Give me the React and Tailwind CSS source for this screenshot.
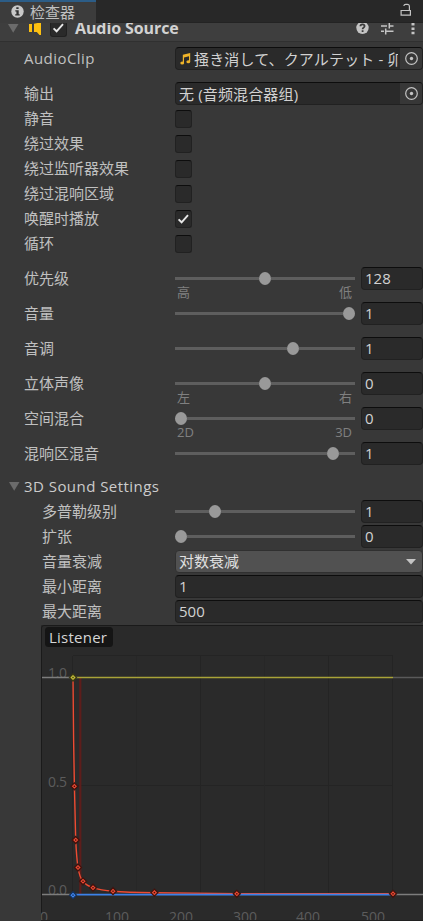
import React from "react";

function Box({ checked, className = "" }) {
  return (
    <span className={`flex h-[18px] w-[17px] shrink-0 items-center justify-center rounded-[3px] border border-[#212121] border-t-[#0d0d0d] bg-[#2a2a2a] ${className}`}>
      {checked && (
        <svg width="13" height="12" viewBox="0 0 13 12" fill="none" stroke="#e8e8e8" strokeWidth="1.9">
          <path d="M1.6 6.4 L4.6 9.3 L11 2.2" />
        </svg>
      )}
    </span>
  );
}

function Row({ label, sub, gap, latin, children }) {
  return (
    <div className={`flex h-[23px] items-center ${gap ? "mt-3" : "mt-0.5"} ${sub ? "pl-[42px]" : "pl-6"}`}>
      <span className={`shrink-0 whitespace-nowrap pb-0.5 ${sub ? "w-[133px]" : "w-[151px]"} ${latin ? "tracking-[0.45px]" : ""}`}>{label}</span>
      {children}
    </div>
  );
}

function Field({ children, className = "" }) {
  return (
    <div className={`flex h-[23px] items-center overflow-hidden rounded-[4px] border border-[#212121] border-t-[#0d0d0d] bg-[#2a2a2a] pb-px pl-[3px] text-[#d2d2d2] ${className}`}>
      {children}
    </div>
  );
}

function ObjectField({ children }) {
  return (
    <div className="flex h-[23px] w-[248px] overflow-hidden rounded-[4px] border border-[#212121] border-t-[#0d0d0d] bg-[#2a2a2a] text-[#d2d2d2]">
      <div className="mr-0.5 flex w-[222px] shrink-0 items-center overflow-hidden whitespace-nowrap pl-[3px] tracking-[0.15px]">{children}</div>
      <div className="flex flex-1 items-center justify-center bg-[#373737]">
        <svg width="15" height="15" viewBox="0 0 15 15">
          <circle cx="7.5" cy="7.5" r="5.8" fill="none" stroke="#c4c4c4" strokeWidth="1.2" />
          <circle cx="7.5" cy="7.5" r="1.7" fill="#c4c4c4" />
        </svg>
      </div>
    </div>
  );
}

function Slider({ at, value }) {
  return (
    <>
      <div className="flex h-[23px] w-[180px] shrink-0 items-center">
        <span className="h-[3px] bg-[#5e5e5e]" style={{ width: at - 6 }} />
        <span className="h-[13px] w-3 shrink-0 rounded-[50%] bg-[#999999]" />
        <span className="h-[3px] flex-1 bg-[#5e5e5e]" />
      </div>
      <Field className="ml-1.5 w-[62px]">{value}</Field>
    </>
  );
}

function Ends({ left, right }) {
  return (
    <div className="-mb-3 flex h-3 w-full items-center justify-between pl-[177px] pr-[71px] text-[13px] text-[#808080]">
      <span className="-mt-[9px]">{left}</span>
      <span className="-mt-[9px]">{right}</span>
    </div>
  );
}

const keys = [
  [74.4, 786.3], [75.7, 840], [78, 867.5], [83, 881.3], [93, 887.7],
  [113, 891.2], [154.4, 892.6], [236.8, 893.8], [393, 893.8],
];

function Key({ x, y, fill, edge }) {
  return (
    <g>
      <path d={`M${x - 3.5} ${y}L${x} ${y - 3.5}L${x + 3.5} ${y}L${x} ${y + 3.5}Z`} fill={fill} stroke={edge} strokeWidth="1.3" />
      <rect x={x - 0.7} y={y - 0.7} width="1.4" height="1.4" fill={edge} />
    </g>
  );
}

function Chart() {
  return (
    <svg width="382" height="296" viewBox="41 625 382 296" className="block">
      <rect x="41" y="625" width="382" height="296" fill="#2a2a2a" />
      <path d="M41.5 921V628q0-2.5 2.5-2.5H423" fill="none" stroke="#1a1a1a" />
      <g stroke="#242424">
        {[73, 201, 329, 393].map((x) => <path key={x} d={`M${x - 0.5} 656V894`} />)}
        <path d="M73 655.5H393M73 785.5H393" />
      </g>
      <g stroke="#272727">
        {[137, 265].map((x) => <path key={x} d={`M${x - 0.5} 656V894`} />)}
      </g>
      <g fill="#5c5c5c" fontSize="14">
        <text x="48" y="677.5" textLength="19">1.0</text>
        <text x="48" y="786.5" textLength="19">0.5</text>
        <text x="48" y="894.5" textLength="19">0.0</text>
        <text x="40" y="922">0</text>
        <text x="105" y="922" textLength="24">100</text>
        <text x="169" y="922" textLength="24">200</text>
        <text x="233" y="922" textLength="24">300</text>
        <text x="296" y="922" textLength="24">400</text>
        <text x="361" y="922" textLength="24">500</text>
      </g>
      <path d="M42 677.5H73M42 894.5H73M393 894.5H423" stroke="#7d7d7d" strokeWidth="1.5" />
      <path d="M393 677.5H423" stroke="#5a5a5a" strokeWidth="1.5" />
      <path d="M80.3 678V894" stroke="#5e1d1b" strokeWidth="2.2" />
      <path d="M73 677.5H393" stroke="#a9a338" strokeWidth="1.7" />
      <path d="M73 678L73.6 740L74.4 786L75.7 840C76.3 852 77 861 78 867.5C79 874 80.5 878.5 83 881.3C85.5 884.5 88.5 886.4 93 887.7C99 889.7 105 890.6 113 891.2C126 892.2 140 892.5 154.4 892.8L236.8 893.6H393" fill="none" stroke="#ee4b32" strokeWidth="1.4" />
      <path d="M73 894.6H393" stroke="#3c82ea" strokeWidth="1.8" />
      {keys.map(([x, y]) => <Key key={x} x={x} y={y} fill="#ec4a33" edge="#3f120d" />)}
      <Key x={73} y={677.5} fill="#c8c13c" edge="#3b3914" />
      <Key x={73} y={895.2} fill="#3f88f2" edge="#14305c" />
      <rect x="45" y="627" width="68" height="20" rx="3.5" fill="#151515" />
      <text x="49" y="642.5" fontSize="15" fill="#d6d6d6" textLength="58">Listener</text>
      <path d="M41 920.5H423" stroke="#202020" />
    </svg>
  );
}

export default function App() {
  return (
    <div className="h-[921px] w-[423px] overflow-hidden bg-[#383838] font-['Open_Sans','Noto_Sans_CJK_SC',sans-serif] text-[15px] leading-[22px] text-[#c0c0c0]">
      <div className="flex h-[23px] justify-between border-b border-[#232323] bg-[#282828]">
        <div className="flex h-[23px] w-24 items-center border-t-2 border-[#2c5d87] bg-[#3c3c3c] pb-0.5 pl-[11px]">
          <svg width="13" height="13" viewBox="0 0 13 13">
            <circle cx="6.5" cy="6.5" r="6.2" fill="#c8c8c8" />
            <path d="M5.3 2.2h2.3v1.900h-2.3zM4.3 5.3h3.4v4h1v1.300h-4.5v-1.300h1.200v-2.700h-1.100z" fill="#303030" />
          </svg>
          <span className="ml-1.5">检查器</span>
        </div>
        <svg width="12" height="14" viewBox="0 0 12 14" className="mr-[11px] mt-[3px]" fill="none" stroke="#c4c4c4" strokeWidth="1.2">
          <path d="M1.1 7.5h9.3v4.7h-9.3zM9.4 7.5V3.5q0-2.2-2.2-2.2H5.7q-1.6 0-1.9 1.7" />
        </svg>
      </div>

      <div className="flex h-[19px] items-start overflow-hidden border-b border-[#303030] bg-[#3e3e3e] pl-2">
        <svg width="11" height="9" viewBox="0 0 11 9" className="mt-px"><path d="M0 0h10.500L5.200 8.700z" fill="#6b6b6b" /></svg>
        <svg width="13" height="12" viewBox="0 0 13 12" className="ml-2.5"><path d="M0 1h3v8h-3zM5 .8L8.500 0H12v12H10.500L7.800 9H5z" fill="#fdc010" /></svg>
        <Box checked className="-mt-[4px] ml-2" />
        <span className="-mt-[6px] ml-2 w-[105px] whitespace-nowrap text-[16px] font-bold tracking-[-0.1px] text-[#d2d2d2]">Audio Source</span>
        <div className="ml-auto flex items-start">
          <svg width="13" height="13" viewBox="0 0 13 13" className="-mt-px">
            <circle cx="6.5" cy="5.8" r="6.2" fill="#c4c4c4" />
            <path d="M4.400 4.300q.1-2 2.100-2t2.100 1.800q0 1-1.100 1.700-.9.600-.9 1.500M6.600 8.200v1.700" fill="none" stroke="#3a3a3a" strokeWidth="1.8" />
          </svg>
          <svg width="13" height="12" viewBox="0 0 13 12" className="ml-3" fill="none" stroke="#c4c4c4" strokeWidth="1.5">
            <path d="M0 3h6M8.300 3h4.200M8.300 0v5.500M0 8.300h3M4.700 8.300h7.800M4.700 5.500v6" />
          </svg>
          <svg width="4" height="12" viewBox="0 0 4 12" className="ml-[17px] mr-2" fill="#c4c4c4">
            <path d="M.5 0h3v2.500h-3zM.5 4.500h3v2.500h-3zM.5 8.700h3v2.500h-3z" />
          </svg>
        </div>
      </div>

      <div className="pt-[3px]">
        <Row label="AudioClip" latin>
          <ObjectField>
            <svg width="11" height="12" viewBox="0 0 11 12" className="ml-px shrink-0" fill="#f0b429">
              <path d="M2.8 1.8L10.2 0v8.8H9V3.3L4 4.5v5.7H2.8z" />
              <ellipse cx="2.2" cy="10" rx="1.9" ry="1.5" />
              <ellipse cx="8.3" cy="8.7" rx="1.9" ry="1.5" />
            </svg>
            <span className="ml-[3px] font-['Open_Sans','Noto_Sans_CJK_JP',sans-serif]">掻き消して、クアルテット - 卯</span>
          </ObjectField>
        </Row>
        <Row label="输出" gap><ObjectField>无 (音频混合器组)</ObjectField></Row>
        <Row label="静音"><Box /></Row>
        <Row label="绕过效果"><Box /></Row>
        <Row label="绕过监听器效果"><Box /></Row>
        <Row label="绕过混响区域"><Box /></Row>
        <Row label="唤醒时播放"><Box checked /></Row>
        <Row label="循环"><Box /></Row>
        <Row label="优先级" gap><Slider at={90} value="128" /></Row>
        <Ends left="高" right="低" />
        <Row label="音量" gap><Slider at={174} value="1" /></Row>
        <Row label="音调" gap><Slider at={118} value="1" /></Row>
        <Row label="立体声像" gap><Slider at={90} value="0" /></Row>
        <Ends left="左" right="右" />
        <Row label="空间混合" gap><Slider at={6} value="0" /></Row>
        <Ends left="2D" right="3D" />
        <Row label="混响区混音" gap><Slider at={158} value="1" /></Row>
        <div className="mt-2.5 flex h-[23px] items-center pl-[9px] text-[#cccccc]">
          <svg width="11" height="9" viewBox="0 0 11 9"><path d="M0 0h10.500L5.200 8.700z" fill="#6b6b6b" /></svg>
          <span className="ml-1 pb-0.5 tracking-[0.45px]">3D Sound Settings</span>
        </div>
        <Row label="多普勒级别" sub><Slider at={40} value="1" /></Row>
        <Row label="扩张" sub><Slider at={6} value="0" /></Row>
        <Row label="音量衰减" sub>
          <div className="flex h-[23px] w-[248px] items-center justify-between rounded-[4px] border border-[#303030] bg-[#515151] pl-[3px] pr-1.5 text-[#e0e0e0]">
            <span className="pb-0.5">对数衰减</span>
            <svg width="10" height="6" viewBox="0 0 10 6"><path d="M0 0h10L5 5.500z" fill="#c4c4c4" /></svg>
          </div>
        </Row>
        <Row label="最小距离" sub><Field className="w-[248px]">1</Field></Row>
        <Row label="最大距离" sub><Field className="w-[248px]">500</Field></Row>
        <div className="mt-0.5 pl-[41px]"><Chart /></div>
      </div>
    </div>
  );
}
